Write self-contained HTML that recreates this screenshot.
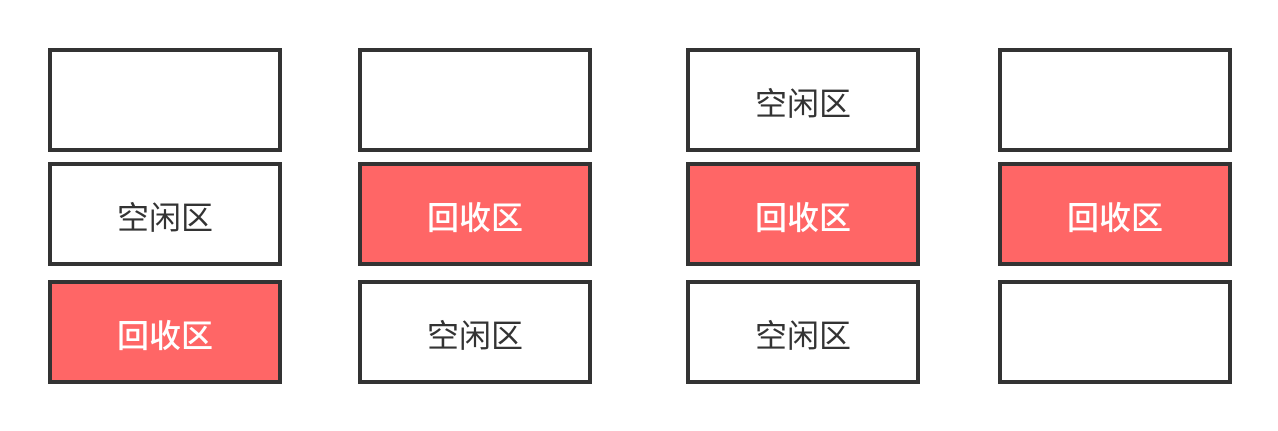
<!DOCTYPE html><html><head><style>
body{margin:0;width:1278px;height:431px;background:#fff;position:relative;font-family:"Liberation Sans","Noto Sans CJK SC",sans-serif}
.b{position:absolute;box-sizing:border-box;width:234px;height:104px;border:4px solid #333;display:flex;align-items:center;justify-content:center;font-size:32px;color:#333;padding-top:4px}
.r{background:#ff6666;color:#fff;font-weight:500}
</style></head><body>
<div class="b" style="left:48px;top:48px"></div>
<div class="b" style="left:48px;top:162px">空闲区</div>
<div class="b r" style="left:48px;top:280px">回收区</div>
<div class="b" style="left:358px;top:48px"></div>
<div class="b r" style="left:358px;top:162px">回收区</div>
<div class="b" style="left:358px;top:280px">空闲区</div>
<div class="b" style="left:686px;top:48px">空闲区</div>
<div class="b r" style="left:686px;top:162px">回收区</div>
<div class="b" style="left:686px;top:280px">空闲区</div>
<div class="b" style="left:998px;top:48px"></div>
<div class="b r" style="left:998px;top:162px">回收区</div>
<div class="b" style="left:998px;top:280px"></div>
</body></html>
